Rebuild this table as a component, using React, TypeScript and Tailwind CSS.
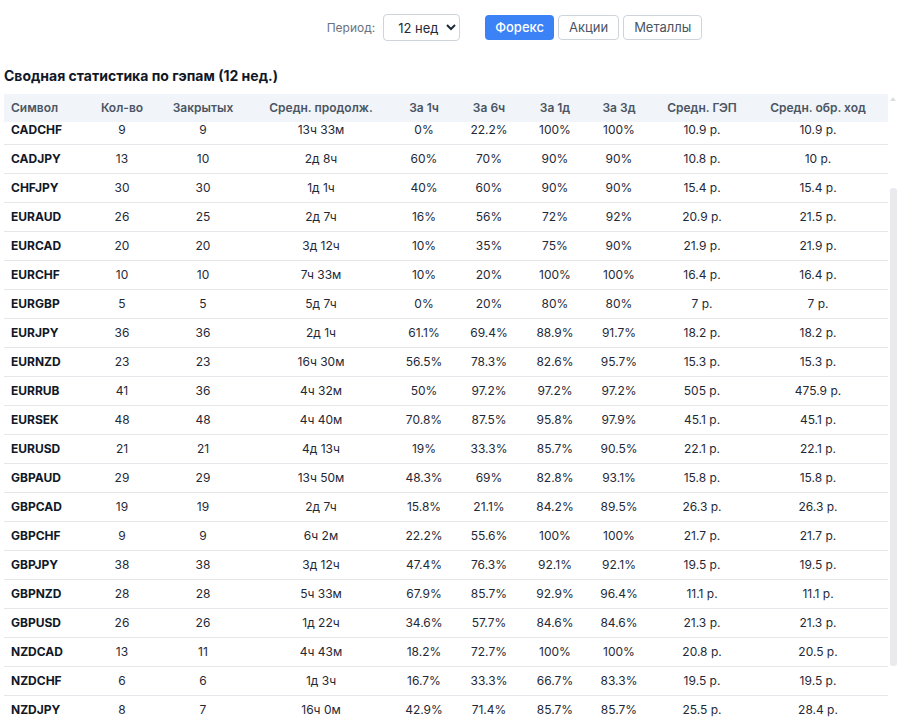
import { useLayoutEffect, useRef } from "react";

type Row = [string, number, number, string, string, string, string, string, string, string];

const hiddenTop: Row[] = [
  ["AUDCAD", 14, 14, "1д 2ч", "35.7%", "64.3%", "92.9%", "100%", "12.4 р.", "12.4 р."],
  ["AUDCHF", 11, 11, "9ч 12м", "27.3%", "54.5%", "90.9%", "100%", "9.8 р.", "9.8 р."],
  ["AUDJPY", 27, 27, "1д 6ч", "44.4%", "70.4%", "88.9%", "92.6%", "14.1 р.", "14.1 р."],
  ["AUDNZD", 18, 18, "2д 3ч", "22.2%", "50%", "77.8%", "88.9%", "11.7 р.", "11.7 р."],
  ["AUDUSD", 22, 22, "18ч 5м", "40.9%", "68.2%", "90.9%", "95.5%", "13.2 р.", "13.2 р."],
];

const rows: Row[] = [
  ["CADCHF", 9, 9, "13ч 33м", "0%", "22.2%", "100%", "100%", "10.9 р.", "10.9 р."],
  ["CADJPY", 13, 10, "2д 8ч", "60%", "70%", "90%", "90%", "10.8 р.", "10 р."],
  ["CHFJPY", 30, 30, "1д 1ч", "40%", "60%", "90%", "90%", "15.4 р.", "15.4 р."],
  ["EURAUD", 26, 25, "2д 7ч", "16%", "56%", "72%", "92%", "20.9 р.", "21.5 р."],
  ["EURCAD", 20, 20, "3д 12ч", "10%", "35%", "75%", "90%", "21.9 р.", "21.9 р."],
  ["EURCHF", 10, 10, "7ч 33м", "10%", "20%", "100%", "100%", "16.4 р.", "16.4 р."],
  ["EURGBP", 5, 5, "5д 7ч", "0%", "20%", "80%", "80%", "7 р.", "7 р."],
  ["EURJPY", 36, 36, "2д 1ч", "61.1%", "69.4%", "88.9%", "91.7%", "18.2 р.", "18.2 р."],
  ["EURNZD", 23, 23, "16ч 30м", "56.5%", "78.3%", "82.6%", "95.7%", "15.3 р.", "15.3 р."],
  ["EURRUB", 41, 36, "4ч 32м", "50%", "97.2%", "97.2%", "97.2%", "505 р.", "475.9 р."],
  ["EURSEK", 48, 48, "4ч 40м", "70.8%", "87.5%", "95.8%", "97.9%", "45.1 р.", "45.1 р."],
  ["EURUSD", 21, 21, "4д 13ч", "19%", "33.3%", "85.7%", "90.5%", "22.1 р.", "22.1 р."],
  ["GBPAUD", 29, 29, "13ч 50м", "48.3%", "69%", "82.8%", "93.1%", "15.8 р.", "15.8 р."],
  ["GBPCAD", 19, 19, "2д 7ч", "15.8%", "21.1%", "84.2%", "89.5%", "26.3 р.", "26.3 р."],
  ["GBPCHF", 9, 9, "6ч 2м", "22.2%", "55.6%", "100%", "100%", "21.7 р.", "21.7 р."],
  ["GBPJPY", 38, 38, "3д 12ч", "47.4%", "76.3%", "92.1%", "92.1%", "19.5 р.", "19.5 р."],
  ["GBPNZD", 28, 28, "5ч 33м", "67.9%", "85.7%", "92.9%", "96.4%", "11.1 р.", "11.1 р."],
  ["GBPUSD", 26, 26, "1д 22ч", "34.6%", "57.7%", "84.6%", "84.6%", "21.3 р.", "21.3 р."],
  ["NZDCAD", 13, 11, "4ч 43м", "18.2%", "72.7%", "100%", "100%", "20.8 р.", "20.5 р."],
  ["NZDCHF", 6, 6, "1д 3ч", "16.7%", "33.3%", "66.7%", "83.3%", "19.5 р.", "19.5 р."],
  ["NZDJPY", 8, 7, "16ч 0м", "42.9%", "71.4%", "85.7%", "85.7%", "25.5 р.", "28.4 р."],
];

// below the fold
const hiddenBottom: Row[] = [
  "NZDUSD", "USDCAD", "USDCHF", "USDCNH", "USDCZK", "USDDKK", "USDHKD", "USDHUF",
  "USDJPY", "USDMXN", "USDNOK", "USDPLN", "USDRUB", "USDSEK", "USDSGD", "USDTRY",
].map((s, i) => [s, 10 + i, 10 + i, "1д 4ч", "30%", "60%", "90%", "95%", "12 р.", "12 р."]);

const allRows = [...hiddenTop, ...rows, ...hiddenBottom];

const headers = [
  "Символ", "Кол-во", "Закрытых", "Средн. продолж.", "За 1ч", "За 6ч", "За 1д", "За 3д", "Средн. ГЭП", "Средн. обр. ход",
];

export default function App() {
  const scrollRef = useRef<HTMLDivElement>(null);

  useLayoutEffect(() => {
    if (scrollRef.current) scrollRef.current.scrollTop = 152;
  }, []);

  return (
    <div className="h-screen overflow-hidden bg-white pl-1 font-['Inter',sans-serif] text-[#1f2937]">
      {/* Filters */}
      <div className="flex items-center justify-center pl-[115px] pt-[14px]">
        <span className="mr-2 text-[12px] text-[#6b7280]">Период:</span>
        <select
          defaultValue="12"
          className="h-[27px] w-[77px] rounded border border-[#cfd4da] bg-white pl-[10px] text-[13px] text-[#1f2937]"
        >
          <option value="4">4 нед</option>
          <option value="12">12 нед</option>
          <option value="24">24 нед</option>
        </select>
        <div className="ml-[25px] flex gap-[4px]">
          <button className="h-[25px] rounded bg-[#3b82f6] px-[10px] text-[13px] font-medium text-white">Форекс</button>
          <button className="h-[25px] rounded border border-[#cfd4da] bg-white px-[10px] text-[13px] text-[#4b5563]">Акции</button>
          <button className="h-[25px] rounded border border-[#cfd4da] bg-white px-[10px] text-[13px] text-[#4b5563]">Металлы</button>
        </div>
      </div>

      <h2 className="mt-[25px] text-[14px] leading-[20px] font-bold text-[#111827]">
        Сводная статистика по гэпам (12 нед.)
      </h2>

      {/* Table */}
      <div className="relative mt-[8px] w-[894px]">
        <div ref={scrollRef} className="h-[770px] overflow-y-auto">
          <table className="w-[884px] table-fixed border-collapse text-[12px]">
            <colgroup>
              <col className="w-[78px]" />
              <col className="w-[80px]" />
              <col className="w-[82px]" />
              <col className="w-[154px]" />
              <col className="w-[52px]" />
              <col className="w-[78px]" />
              <col className="w-[54px]" />
              <col className="w-[74px]" />
              <col className="w-[92px]" />
              <col className="w-[140px]" />
            </colgroup>
            <thead>
              <tr>
                {headers.map((h, i) => (
                  <th
                    key={h}
                    className={`sticky top-0 z-10 h-[28px] bg-[#f1f4f8] font-semibold text-[#4b5563] ${i === 0 ? "pl-[7px] text-left" : "text-center"}`}
                  >
                    {h}
                  </th>
                ))}
              </tr>
            </thead>
            <tbody>
              {allRows.map((r) => (
                <tr key={r[0]} className="h-[29px] border-b border-[#e5e7eb]">
                  <td className="pl-[7px] font-bold text-[#111827]">{r[0]}</td>
                  {r.slice(1).map((v, j) => (
                    <td key={j} className="text-center">
                      {v}
                    </td>
                  ))}
                </tr>
              ))}
            </tbody>
          </table>
        </div>

        {/* scrollbar */}
        <div className="absolute top-[3px] left-[886px] h-0 w-0 border-x-[3px] border-b-[4px] border-x-transparent border-b-[#dcdde3]" />
        <div className="absolute top-[94px] left-[886px] h-[478px] w-[7px] rounded-[3px] bg-[#e9e9ee]" />
      </div>
    </div>
  );
}
